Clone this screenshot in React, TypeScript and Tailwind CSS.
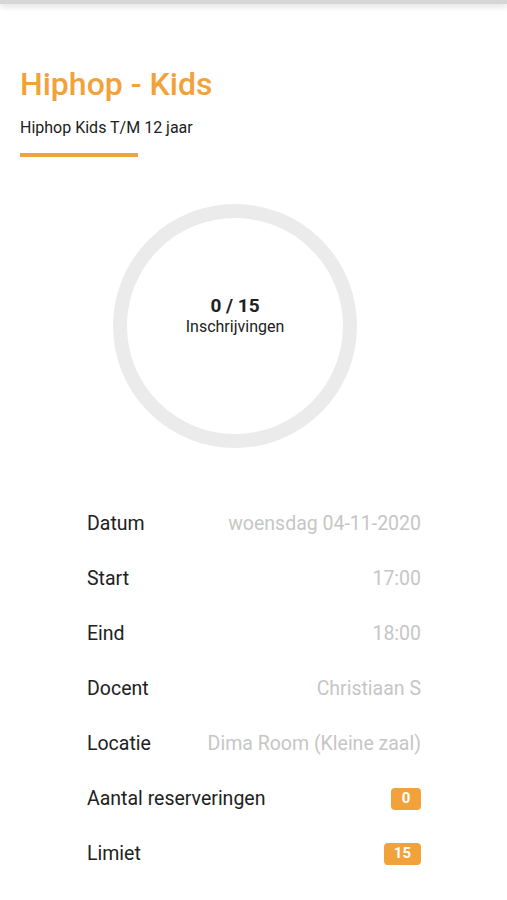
import React, { FC } from 'react'

const rows: { label: string; value: string; badge?: boolean }[] = [
    { label: 'Datum', value: 'woensdag 04-11-2020' },
    { label: 'Start', value: '17:00' },
    { label: 'Eind', value: '18:00' },
    { label: 'Docent', value: 'Christiaan S' },
    { label: 'Locatie', value: 'Dima Room (Kleine zaal)' },
    { label: 'Aantal reserveringen', value: '0', badge: true },
    { label: 'Limiet', value: '15', badge: true },
]

const App: FC = () => {
    return (
        <div className='min-h-[900px] bg-white font-["Roboto",sans-serif] text-[#212121]'>
            <div className='h-[4px] bg-[#d6d6d6] shadow-[0_2px_6px_rgba(0,0,0,0.18)]' />

            <section className='px-5 pt-[62px]'>
                <h1 className='text-[32px] leading-[36px] font-medium text-[#f2a23a]'>Hiphop - Kids</h1>
                <p className='mt-[16px] text-[16px] leading-[20px]'>Hiphop Kids T/M 12 jaar</p>
                <div className='mt-[15px] h-[4px] w-[118px] bg-[#f2a23a]' />
            </section>

            <div className='mt-[47px] ml-[113px] w-[244px] h-[244px] rounded-full border-[14px] border-[#ebebeb] flex flex-col items-center justify-center pb-[20px]'>
                <span className='text-[19px] leading-[22px] font-bold'>0 / 15</span>
                <span className='text-[16px] leading-[20px]'>Inschrijvingen</span>
            </div>

            <div className='mt-[48px] ml-[87px] w-[334px]'>
                {rows.map((r) => (
                    <div key={r.label} className='h-[55px] flex items-center justify-between'>
                        <span className='text-[19.5px]'>{r.label}</span>
                        {r.badge ? (
                            <span className='h-[22px] min-w-[30px] px-[10px] rounded-[4px] bg-[#f2a23a] text-white text-[15px] font-bold flex items-center justify-center'>
                                {r.value}
                            </span>
                        ) : (
                            <span className='text-[19.5px] text-[#c6c6c6]'>{r.value}</span>
                        )}
                    </div>
                ))}
            </div>
        </div>
    )
}

export default App
